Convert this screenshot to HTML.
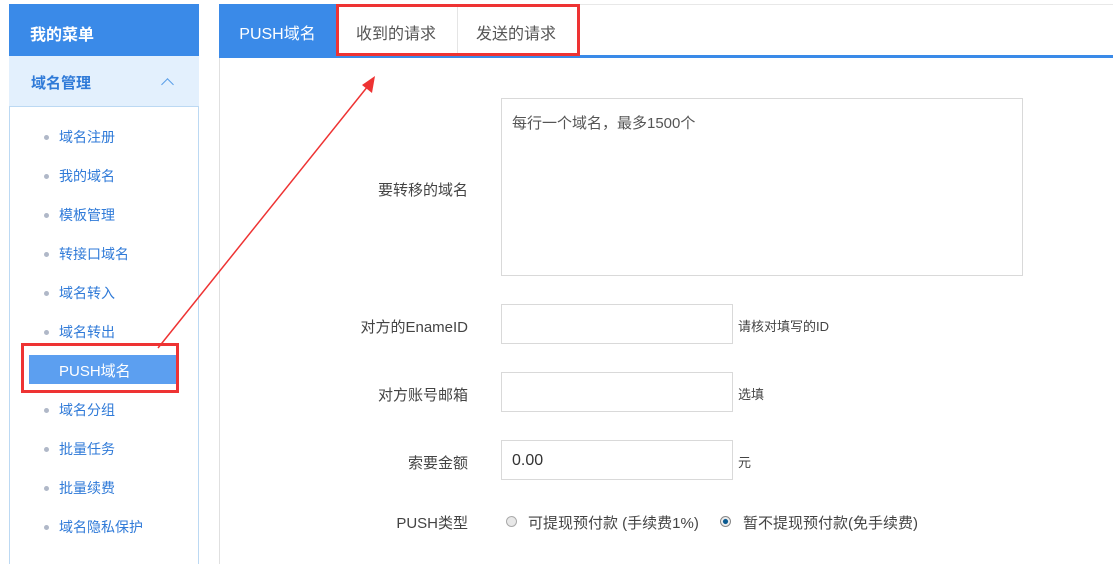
<!DOCTYPE html>
<html><head><meta charset="utf-8"><style>
*{margin:0;padding:0;box-sizing:border-box}
body{width:1113px;height:550px;overflow:hidden;background:#fff;font-family:"Liberation Sans","Noto Sans CJK SC",sans-serif;position:relative}
.a{position:absolute;white-space:nowrap}
.side{left:9px;top:4px;width:190px;height:560px;border-left:1px solid #bcd9f3;border-right:1px solid #bcd9f3}
.hd{left:9px;top:4px;width:190px;height:52px;background:#3a8ae8;color:#fff;font-size:16px;font-weight:bold;padding:17px 0 0 21px}
.sub{left:9px;top:56px;width:190px;height:51px;background:#e3f0fd;border-bottom:1px solid #bcd9f3;color:#2f7ad8;font-size:15px;font-weight:bold;padding:16px 0 0 22px}
.item{left:44px;font-size:14px;color:#2f7ad8}
.item:before{content:"";position:absolute;left:0;top:8px;width:5px;height:5px;border-radius:50%;background:#b0b8c8}
.item span{margin-left:15px}
.lbl{font-size:15px;color:#444;text-align:right;width:260px;left:208px}
.inp{border:1px solid #d9d9d9;left:501px;width:232px;height:40px}
.note{font-size:13px;color:#444;left:738px}
</style></head><body>
<div class="a side"></div>
<div class="a hd">我的菜单</div>
<div class="a sub">域名管理<span style="position:absolute;left:154px;top:24px;width:9px;height:9px;border-left:1px solid #5a9ee8;border-top:1px solid #5a9ee8;transform:rotate(45deg)"></span></div>
<div class="a item" style="top:127px"><span>域名注册</span></div>
<div class="a item" style="top:166px"><span>我的域名</span></div>
<div class="a item" style="top:205px"><span>模板管理</span></div>
<div class="a item" style="top:244px"><span>转接口域名</span></div>
<div class="a item" style="top:283px"><span>域名转入</span></div>
<div class="a item" style="top:322px"><span>域名转出</span></div>
<div class="a" style="left:29px;top:355px;width:147px;height:29px;background:#5c9ff0;color:#fff;font-size:15px;padding:5px 0 0 30px">PUSH域名</div>
<div class="a" style="left:21px;top:343px;width:158px;height:50px;border:3px solid #ee3333"></div>
<div class="a item" style="top:400px"><span>域名分组</span></div>
<div class="a item" style="top:439px"><span>批量任务</span></div>
<div class="a item" style="top:478px"><span>批量续费</span></div>
<div class="a item" style="top:517px"><span>域名隐私保护</span></div>

<div class="a" style="left:219px;top:4px;width:900px;height:560px;border-left:1px solid #e0e0e0;border-top:1px solid #e8e8e8"></div>
<div class="a" style="left:219px;top:55px;width:894px;height:3px;background:#3a8ae8"></div>
<div class="a" style="left:219px;top:4px;width:117px;height:52px;background:#3a8ae8;color:#fff;font-size:16px;padding-top:16px;text-align:center">PUSH域名</div>
<div class="a" style="left:336px;top:4px;width:244px;height:52px;background:#fff;border:3px solid #ee3333"></div>
<div class="a" style="left:457px;top:7px;width:1px;height:46px;background:#e5e5e5"></div>
<div class="a" style="left:356px;top:20px;font-size:16px;color:#555">收到的请求</div>
<div class="a" style="left:476px;top:20px;font-size:16px;color:#555">发送的请求</div>

<svg class="a" style="left:0;top:0" width="1113" height="550"><line x1="158" y1="348" x2="368" y2="86" stroke="#ee3333" stroke-width="1.5"/><polygon points="375,76 372,93 362,85" fill="#ee3333"/></svg>

<div class="a lbl" style="top:179px">要转移的域名</div>
<div class="a" style="left:501px;top:98px;width:522px;height:178px;border:1px solid #d9d9d9;padding:13px 10px;font-size:15px;color:#555">每行一个域名，最多1500个</div>
<div class="a lbl" style="top:316px">对方的EnameID</div>
<div class="a inp" style="top:304px"></div><div class="a note" style="top:316px">请核对填写的ID</div>
<div class="a lbl" style="top:384px">对方账号邮箱</div>
<div class="a inp" style="top:372px"></div><div class="a note" style="top:384px">选填</div>
<div class="a lbl" style="top:452px">索要金额</div>
<div class="a inp" style="top:440px;padding:11px 10px;font-size:16px;color:#333">0.00</div><div class="a note" style="top:452px">元</div>
<div class="a lbl" style="top:512px">PUSH类型</div>
<div class="a" style="left:506px;top:516px;width:11px;height:11px;border-radius:50%;border:1px solid #aaa;background:#e8e8e8"></div>
<div class="a" style="left:528px;top:512px;font-size:15px;color:#444">可提现预付款 (手续费1%)</div>
<div class="a" style="left:720px;top:516px;width:11px;height:11px;border-radius:50%;border:1px solid #888;background:radial-gradient(#0a5a90 35%,#eee 45%)"></div>
<div class="a" style="left:743px;top:512px;font-size:15px;color:#444">暂不提现预付款(免手续费)</div>
</body></html>
